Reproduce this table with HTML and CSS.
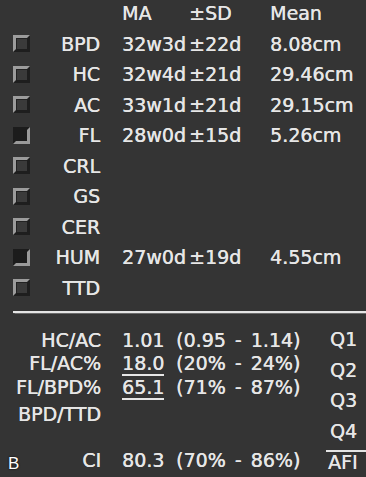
FILE: index.html
```html
<!DOCTYPE html>
<html>
<head>
<meta charset="utf-8">
<link rel="stylesheet" href="styles.css">
</head>
<body>
<div class="screen">
  <div class="meas">
    <div class="row head"><span></span><span></span><span class="ma">MA</span><span>±SD</span><span>Mean</span></div>
    <div class="row"><span class="cb"></span><span class="lbl">BPD</span><span class="ma">32w3d</span><span>±22d</span><span>8.08cm</span></div>
    <div class="row"><span class="cb"></span><span class="lbl">HC</span><span class="ma">32w4d</span><span>±21d</span><span>29.46cm</span></div>
    <div class="row"><span class="cb"></span><span class="lbl">AC</span><span class="ma">33w1d</span><span>±21d</span><span>29.15cm</span></div>
    <div class="row"><span class="cb on"></span><span class="lbl">FL</span><span class="ma">28w0d</span><span>±15d</span><span>5.26cm</span></div>
    <div class="row"><span class="cb"></span><span class="lbl">CRL</span><span class="ma"></span><span></span><span></span></div>
    <div class="row"><span class="cb"></span><span class="lbl">GS</span><span class="ma"></span><span></span><span></span></div>
    <div class="row"><span class="cb"></span><span class="lbl">CER</span><span class="ma"></span><span></span><span></span></div>
    <div class="row"><span class="cb on"></span><span class="lbl">HUM</span><span class="ma">27w0d</span><span>±19d</span><span>4.55cm</span></div>
    <div class="row"><span class="cb"></span><span class="lbl">TTD</span><span class="ma"></span><span></span><span></span></div>
  </div>
  <div class="sep"></div>
  <div class="calc">
    <div class="ratios">
      <div class="r r1"><span class="lbl">HC/AC</span><span class="val">1.01</span><span class="rng">(0.95 - 1.14)</span></div>
      <div class="r r2"><span class="lbl">FL/AC%</span><span class="val"><span class="ul">18.0</span></span><span class="rng">(20% - 24%)</span></div>
      <div class="r r3"><span class="lbl">FL/BPD%</span><span class="val"><span class="ul">65.1</span></span><span class="rng">(71% - 87%)</span></div>
      <div class="r r4"><span class="lbl">BPD/TTD</span><span class="val"></span><span class="rng"></span></div>
      <div class="r r5"><span class="lbl"><span class="fig">B</span>CI</span><span class="val">80.3</span><span class="rng">(70% - 86%)</span></div>
    </div>
    <div class="quads">
      <div class="q">Q1</div>
      <div class="q">Q2</div>
      <div class="q">Q3</div>
      <div class="q">Q4</div>
      <div class="afi">AFI</div>
    </div>
  </div>
</div>
</body>
</html>
```

FILE: styles.css
```css
html, body {
  margin: 0;
  padding: 0;
  background: #343434;
}
.screen {
  width: 366px;
  height: 477px;
  overflow: hidden;
  background: #343434;
  color: #e6e6e6;
  font-family: "DejaVu Sans", sans-serif;
  font-size: 19px;
  text-shadow: 0.35px 0 0 #e6e6e6;
}
.row {
  display: grid;
  grid-template-columns: 17px 70px 89px 81px auto;
  align-items: center;
  padding-left: 13px;
  height: 30.5px;
  white-space: nowrap;
}
.row.head {
  height: 25px;
  margin-bottom: 3.25px;
}
.row .lbl {
  text-align: right;
}
.row .ma {
  padding-left: 22px;
}
.cb {
  box-sizing: border-box;
  width: 17px;
  height: 17px;
  border: 3px solid;
  border-color: #9c9c9c #1e1e1e #1e1e1e #9c9c9c;
  background: #3a3a3a;
  box-shadow: inset 1px 1px 0 #222;
}
.cb.on {
  border-color: #1c1c1c #9a9a9a #9a9a9a #1c1c1c;
  background: #1c1c1c;
  box-shadow: none;
}
.sep {
  margin: 8.25px 0 0 13px;
  height: 2px;
  background: #e4e4e4;
  box-shadow: 0 0 1px 0.5px rgba(160,160,160,0.5);
}
.calc {
  display: flex;
  align-items: flex-start;
}
.ratios {
  width: 326px;
  padding-top: 16px;
}
.r {
  display: grid;
  grid-template-columns: 101px 75px auto;
  line-height: 22px;
  height: 22px;
  white-space: nowrap;
}
.r .lbl {
  text-align: right;
}
.r .val {
  padding-left: 21px;
}
.r .rng {
  word-spacing: 3px;
}
.r2 { margin-top: 0.5px; }
.r3 { margin-top: 2px; }
.r4 { margin-top: 5px; }
.r5 { margin-top: 24.5px; }
.ul {
  border-bottom: 2px solid #e6e6e6;
}
.fig {
  float: left;
  margin-left: 8px;
  padding-top: 6px;
  font-family: "Liberation Sans", Arial, sans-serif;
  font-size: 17px;
  line-height: 18px;
  color: #ffffff;
  text-shadow: 0 0 2px #111, 0 0 1px #111;
}
.quads {
  width: 40px;
  padding-top: 11.25px;
}
.q {
  line-height: 30.5px;
  padding-left: 4px;
}
.afi {
  margin-top: 3.75px;
  border-top: 2px solid #e4e4e4;
  line-height: 20px;
  padding-left: 2px;
}
```
